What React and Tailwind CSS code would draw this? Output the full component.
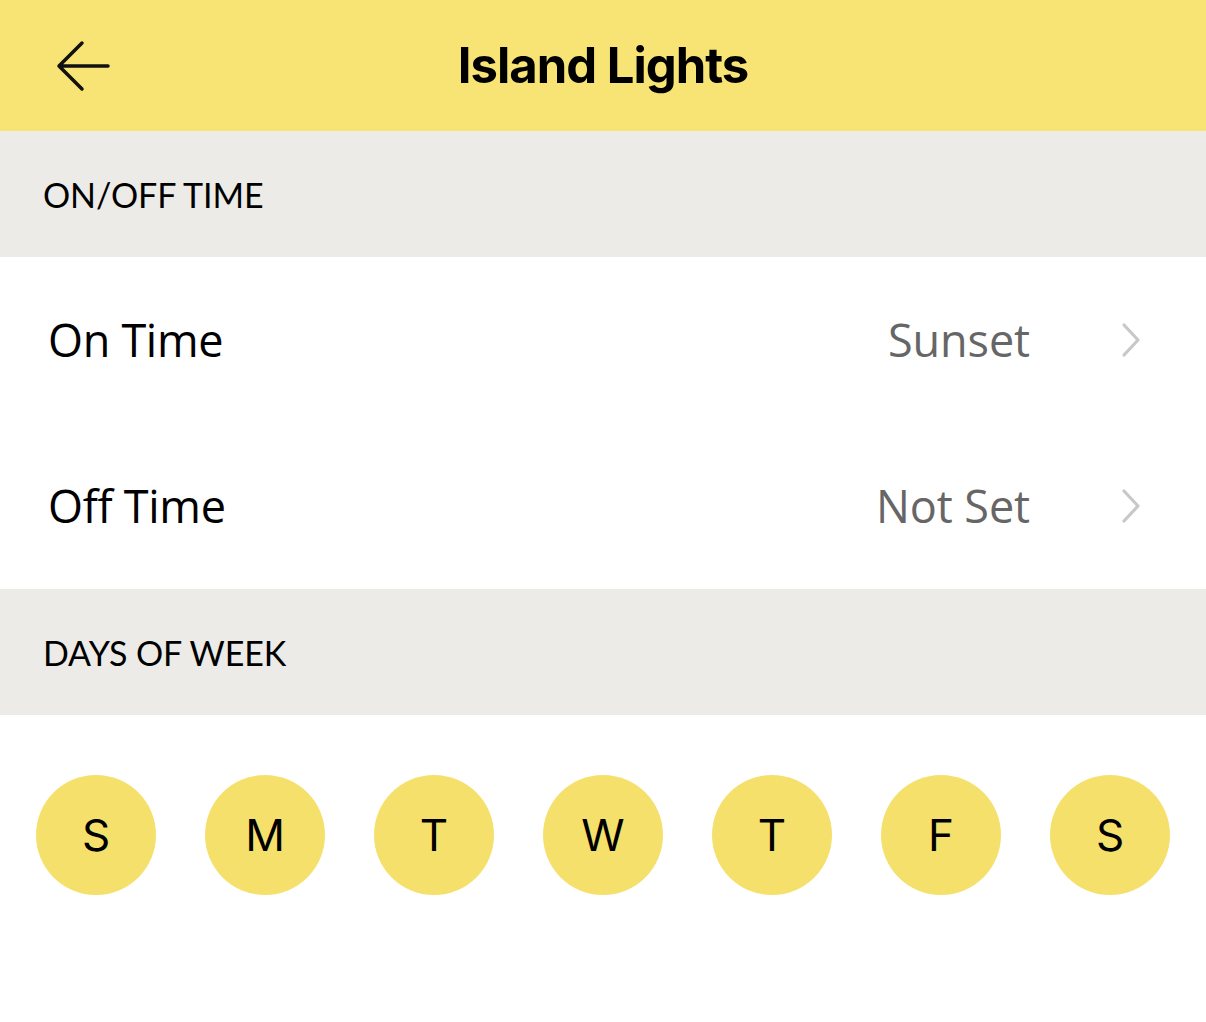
const days = ['S', 'M', 'T', 'W', 'T', 'F', 'S'];

const Chevron = () => (
  <svg width="22" height="36" viewBox="0 0 22 36" fill="none" className="shrink-0">
    <path d="M4 3 L18 18 L4 33" stroke="#c8c8c8" strokeWidth="3.2" strokeLinecap="round" strokeLinejoin="round" />
  </svg>
);

const Row = ({ label, value }) => (
  <div className="h-[166px] flex items-center pl-[48px] pr-[64px]" style={{ fontFamily: '"Open Sans", sans-serif' }}>
    <span className="text-[45px] text-black tracking-[-0.3px] flex-1">{label}</span>
    <span className="text-[45px] text-[#666666] tracking-[-0.1px] mr-[90px]">{value}</span>
    <Chevron />
  </div>
);

const SectionHeader = ({ children }) => (
  <div className="h-[126px] bg-[#ecebe7] flex items-center pl-[43px]">
    <span className="text-[34px] text-black tracking-[-0.1px] uppercase">{children}</span>
  </div>
);

export default function App() {
  return (
    <div className="w-[1206px] h-[1022px] bg-white overflow-hidden" style={{ fontFamily: 'Lato, "Open Sans", sans-serif' }}>
      <header className="h-[131px] bg-[#f7e474] relative flex items-center justify-center">
        <button className="absolute left-[56px] top-[40px]">
          <svg width="54" height="52" viewBox="0 0 54 52" fill="none">
            <path d="M52 26 H3 M26 3 L3 26 L26 49" stroke="#111" strokeWidth="3.5" strokeLinecap="round" strokeLinejoin="round" />
          </svg>
        </button>
        <h1 className="text-[49px] font-bold text-black tracking-[-1px]" style={{ fontFamily: 'Inter, sans-serif' }}>Island Lights</h1>
      </header>
      <SectionHeader>On/Off Time</SectionHeader>
      <Row label="On Time" value="Sunset" />
      <Row label="Off Time" value="Not Set" />
      <SectionHeader>Days of Week</SectionHeader>
      <div className="flex justify-between px-[36px] pt-[60px]">
        {days.map((d, i) => (
          <div key={i} className="w-[120px] h-[120px] rounded-full bg-[#f6e06c] flex items-center justify-center">
            <span className="text-[44px] text-black" style={{ fontFamily: 'Inter, sans-serif' }}>{d}</span>
          </div>
        ))}
      </div>
    </div>
  );
}
